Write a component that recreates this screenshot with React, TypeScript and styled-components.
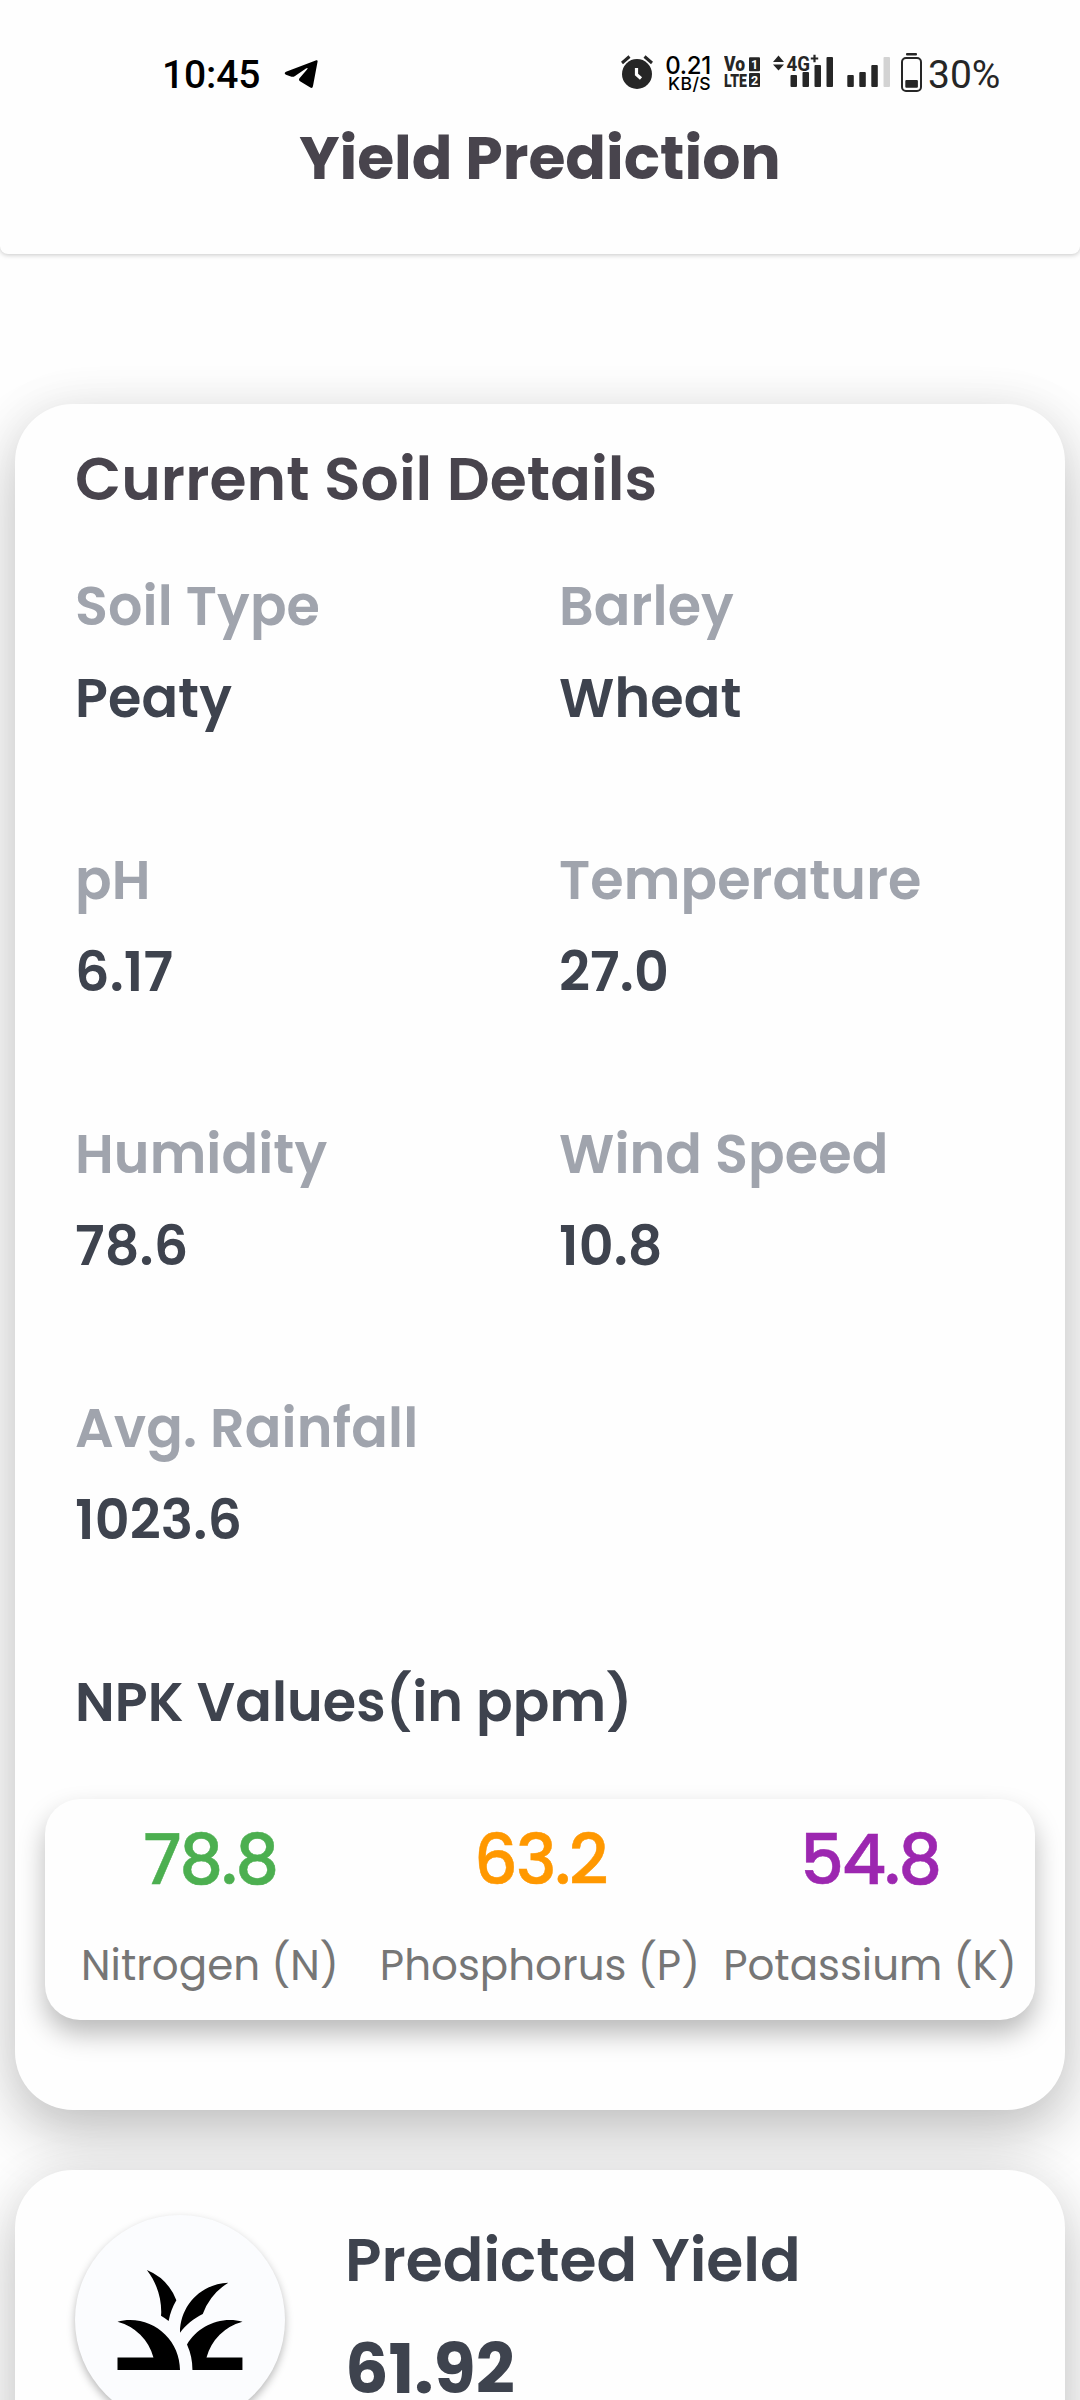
import React from "react";
import styled, { createGlobalStyle } from "styled-components";
import { MdGrass } from "react-icons/md";

const GlobalStyle = createGlobalStyle`
  * { box-sizing: border-box; }
  body { margin: 0; background: #fefefe; }
`;

const ink = "#3e434e";
const heading = "#48444d";
const statusInk = "#262626";

const Screen = styled.div`
  display: flex;
  flex-direction: column;
  width: 1080px;
  height: 2400px;
  overflow: hidden;
  background: #fefefe;
  font-family: "Poppins", "Inter", sans-serif;
  white-space: nowrap;
`;

const Header = styled.header`
  flex: none;
  height: 254px;
  background: #fefefe;
  border-radius: 0 0 8px 8px;
  box-shadow: 0 1px 5px rgba(0, 0, 0, 0.22);
`;

const StatusBar = styled.div`
  display: flex;
  align-items: center;
  justify-content: space-between;
  height: 113px;
  padding: 36px 79px 0 162px;
  color: ${statusInk};
`;

const StatusGroup = styled.div<{ $gap: number }>`
  display: flex;
  align-items: center;
  gap: ${(p) => p.$gap}px;
`;

const Clock = styled.span`
  width: 99px;
  font: 500 39px/40px "Roboto", sans-serif;
  letter-spacing: -0.15px;
  color: #000;
`;

const BatteryText = styled.span`
  width: 73px;
  font: 400 39px/40px "Roboto", sans-serif;
`;

const Speed = styled.div`
  display: flex;
  flex-direction: column;
  align-items: flex-end;
  width: 49px;
  padding-right: 3px;
  margin-bottom: 2px;
  font-family: "Inter", sans-serif;
  font-weight: 500;
  color: #000;
`;

const SpeedValue = styled.span`
  font-size: 24px;
  line-height: 20px;
  letter-spacing: -0.3px;
`;

const SpeedUnit = styled.span`
  font-size: 17.5px;
  line-height: 16px;
  letter-spacing: 0.4px;
`;

const StatusIcon = styled.svg`
  display: block;
  height: 41px;
  font-family: "Roboto", sans-serif;
  font-weight: 700;
`;

const Title = styled.h1`
  margin: 0;
  text-align: center;
  font-size: 60px;
  line-height: 90px;
  font-weight: 700;
  color: ${heading};
`;

const Content = styled.main`
  display: flex;
  flex-direction: column;
  gap: 60px;
  padding: 150px 15px 0;
`;

const Card = styled.section`
  flex: none;
  border-radius: 58px;
  background: #fefefe;
  box-shadow: 0 26px 60px rgba(0, 0, 0, 0.22), 0 0 52px rgba(0, 0, 0, 0.06);
`;

const SoilCard = styled(Card)`
  height: 1706px;
  padding: 30px 30px 0;
`;

const SectionTitle = styled.h2`
  margin: 0 0 42px 30px;
  font-size: 60px;
  line-height: 90px;
  letter-spacing: 0.06px;
  font-weight: 600;
  color: ${heading};
`;

const Details = styled.dl`
  display: grid;
  grid-template-columns: 484px 1fr;
  row-gap: 101px;
  margin: 0 0 101px 30px;
`;

const Detail = styled.div`
  display: flex;
  flex-direction: column;
  gap: 11px;
  font-size: 54px;
  line-height: 81px;
  letter-spacing: 0.12px;
  font-weight: 600;
`;

const DetailLabel = styled.dt`
  color: #a0a4ad;
`;

const DetailValue = styled.dd`
  margin: 0;
  color: ${ink};
`;

const NpkTitle = styled.h3`
  margin: 0 0 56px 30px;
  font-size: 54px;
  line-height: 81px;
  letter-spacing: 0.12px;
  font-weight: 600;
  color: ${ink};
`;

const NpkPanel = styled.div`
  display: grid;
  grid-template-columns: repeat(3, 1fr);
  height: 221px;
  padding-top: 12px;
  border-radius: 35px;
  background: #fefefe;
  box-shadow: 0 14px 27px rgba(0, 0, 0, 0.27);
`;

const Nutrient = styled.div`
  display: flex;
  flex-direction: column;
  align-items: center;
  gap: 24px;
`;

const NutrientValue = styled.span<{ $color: string }>`
  font-size: 69px;
  line-height: 99px;
  letter-spacing: -2.3px;
  font-weight: 500;
  color: ${(p) => p.$color};
  -webkit-text-stroke: 0.5px ${(p) => p.$color};
`;

const NutrientName = styled.span`
  font-size: 42px;
  line-height: 63px;
  font-weight: 400;
  color: #767676;
`;

const YieldCard = styled(Card)`
  display: flex;
  gap: 60px;
  height: 310px;
  padding: 45px 60px 0;
`;

const IconDisc = styled.div`
  display: flex;
  align-items: center;
  justify-content: center;
  width: 210px;
  height: 210px;
  border-radius: 50%;
  background: #fbfcfe;
  color: #000;
  box-shadow: 0 4px 9px rgba(0, 0, 0, 0.28);
`;

const YieldText = styled.div`
  display: flex;
  flex-direction: column;
  gap: 15px;
  color: ${ink};
`;

const YieldLabel = styled.span`
  font-size: 60px;
  line-height: 90px;
  font-weight: 600;
`;

const YieldValue = styled.span`
  font-size: 68.4px;
  line-height: 99px;
  font-weight: 700;
`;

const details = [
  ["Soil Type", "Peaty"],
  ["Barley", "Wheat"],
  ["pH", "6.17"],
  ["Temperature", "27.0"],
  ["Humidity", "78.6"],
  ["Wind Speed", "10.8"],
  ["Avg. Rainfall", "1023.6"],
];

const nutrients = [
  { value: "78.8", name: "Nitrogen (N)", color: "#4caf50" },
  { value: "63.2", name: "Phosphorus (P)", color: "#ff9800" },
  { value: "54.8", name: "Potassium (K)", color: "#9c27b0" },
];

const TelegramIcon = () => (
  <StatusIcon width="34" viewBox="284 54 34 41">
    <path
      d="M316.3 60.3 286 71.7Q283.4 73 286 74.8L291.5 76.7Q293.3 77.2 295 76L306 68.4Q308.6 67.2 307 69.5L299.5 78.3Q298.3 80 300 81.3L310.3 87.6Q312.6 88.6 313 86L317.6 61.6Q317.8 59.9 316.3 60.3Z"
      fill="#000"
    />
  </StatusIcon>
);

const AlarmIcon = () => (
  <StatusIcon width="34" viewBox="621 54 34 41">
    <circle cx="637" cy="74" r="15" fill={statusInk} />
    <path d="M622 63 629.5 56.5M652 63 644.5 56.5" stroke={statusInk} strokeWidth="3" />
    <path d="M636.5 68V74.5L641 78.5" stroke="#fff" strokeWidth="3.2" fill="none" />
  </StatusIcon>
);

const VolteIcon = () => (
  <StatusIcon width="38" viewBox="724 54 38 41" fill={statusInk}>
    <text x="724" y="71.2" fontSize="19.5" fontWeight="900" textLength="21" lengthAdjust="spacingAndGlyphs">Vo</text>
    <text x="724" y="87" fontSize="18" fontWeight="900" textLength="23" lengthAdjust="spacingAndGlyphs">LTE</text>
    <rect x="749" y="57.3" width="11" height="13.9" rx="1" />
    <rect x="749" y="73.1" width="11" height="13.9" rx="1" />
    <text x="754.5" y="68.7" fontSize="12.5" textAnchor="middle" fill="#fff">1</text>
    <text x="754.5" y="84.5" fontSize="12.5" textAnchor="middle" fill="#fff">2</text>
  </StatusIcon>
);

const MobileDataIcon = () => (
  <StatusIcon width="64" viewBox="772 54 64 41" fill={statusInk}>
    <path d="M773 62 778.5 55.5 784 62ZM773 64.5 778.5 70.5 784 64.500Z" />
    <rect x="790.5" y="75" width="6.5" height="12" rx="1" />
    <rect x="802.5" y="72" width="6.5" height="15" rx="1" />
    <rect x="814.5" y="65" width="6.5" height="22" rx="1" />
    <rect x="826.5" y="57" width="6.5" height="30" rx="1" />
    <text x="786.5" y="70.5" fontSize="20.5" textLength="23.5" lengthAdjust="spacingAndGlyphs">4G</text>
    <path d="M814.5 54.8V62.2M810.8 58.5H818.2" stroke={statusInk} strokeWidth="2.2" />
  </StatusIcon>
);

const SignalIcon = () => (
  <StatusIcon width="45" viewBox="846 54 45 41" fill={statusInk}>
    <rect x="847.3" y="75" width="6.5" height="12" rx="1" />
    <rect x="859.3" y="72" width="6.5" height="15" rx="1" />
    <rect x="871.3" y="65" width="6.5" height="22" rx="1" />
    <rect x="883.5" y="57" width="6.5" height="30" rx="1" fill="#d3d3d3" />
  </StatusIcon>
);

const BatteryIcon = () => (
  <StatusIcon width="22" viewBox="901 54 22 41" fill={statusInk} overflow="visible">
    <rect x="906" y="53" width="11" height="2.5" rx="1" />
    <rect x="902" y="58" width="19" height="33" rx="4" fill="none" stroke={statusInk} strokeWidth="2" />
    <rect x="905.3" y="80" width="12.6" height="7.7" rx="1" />
  </StatusIcon>
);

export default function App() {
  return (
    <Screen>
      <GlobalStyle />
      <Header>
        <StatusBar>
          <StatusGroup $gap={23}>
            <Clock>10:45</Clock>
            <TelegramIcon />
          </StatusGroup>
          <StatusGroup $gap={10}>
            <AlarmIcon />
            <Speed>
              <SpeedValue>0.21</SpeedValue>
              <SpeedUnit>KB/S</SpeedUnit>
            </Speed>
            <VolteIcon />
            <MobileDataIcon />
            <SignalIcon />
            <StatusGroup $gap={5}>
              <BatteryIcon />
              <BatteryText>30%</BatteryText>
            </StatusGroup>
          </StatusGroup>
        </StatusBar>
        <Title>Yield Prediction</Title>
      </Header>
      <Content>
        <SoilCard>
          <SectionTitle>Current Soil Details</SectionTitle>
          <Details>
            {details.map(([label, value]) => (
              <Detail key={label}>
                <DetailLabel>{label}</DetailLabel>
                <DetailValue>{value}</DetailValue>
              </Detail>
            ))}
          </Details>
          <NpkTitle>NPK Values(in ppm)</NpkTitle>
          <NpkPanel>
            {nutrients.map((n) => (
              <Nutrient key={n.name}>
                <NutrientValue $color={n.color}>{n.value}</NutrientValue>
                <NutrientName>{n.name}</NutrientName>
              </Nutrient>
            ))}
          </NpkPanel>
        </SoilCard>
        <YieldCard>
          <IconDisc>
            <MdGrass size={150} />
          </IconDisc>
          <YieldText>
            <YieldLabel>Predicted Yield</YieldLabel>
            <YieldValue>61.92</YieldValue>
          </YieldText>
        </YieldCard>
      </Content>
    </Screen>
  );
}
